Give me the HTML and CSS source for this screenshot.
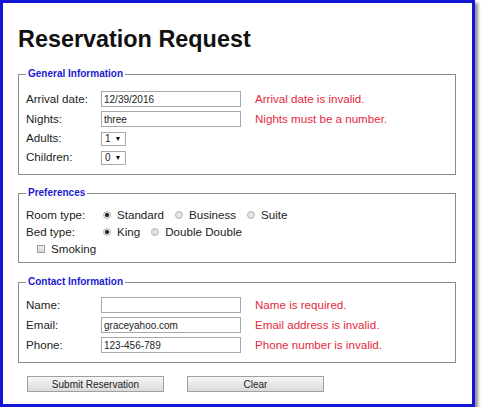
FILE: index.html
```html
<!DOCTYPE html>
<html>
<head>
<meta charset="utf-8">
<title>Reservation Request</title>
<link rel="stylesheet" href="styles.css">
</head>
<body>
<div class="frame">
  <h1>Reservation Request</h1>

  <fieldset class="group general">
    <legend>General Information</legend>
    <div class="row">
      <span class="label">Arrival date:</span>
      <input class="text" type="text" value="12/39/2016">
      <span class="err">Arrival date is invalid.</span>
    </div>
    <div class="row">
      <span class="label">Nights:</span>
      <input class="text" type="text" value="three">
      <span class="err">Nights must be a number.</span>
    </div>
    <div class="row short">
      <span class="label">Adults:</span>
      <span class="select"><select><option>1</option></select></span>
    </div>
    <div class="row short">
      <span class="label">Children:</span>
      <span class="select"><select><option>0</option></select></span>
    </div>
  </fieldset>

  <fieldset class="group prefs">
    <legend>Preferences</legend>
    <div class="prow">
      <span class="label">Room type:</span>
      <div class="opts">
        <label class="opt"><input class="radio" type="radio" name="room" checked>Standard</label>
        <label class="opt"><input class="radio" type="radio" name="room">Business</label>
        <label class="opt"><input class="radio" type="radio" name="room">Suite</label>
      </div>
    </div>
    <div class="prow">
      <span class="label">Bed type:</span>
      <div class="opts">
        <label class="opt"><input class="radio" type="radio" name="bed" checked>King</label>
        <label class="opt"><input class="radio" type="radio" name="bed">Double Double</label>
      </div>
    </div>
    <div class="prow check">
      <label class="opt"><input class="box" type="checkbox">Smoking</label>
    </div>
  </fieldset>

  <fieldset class="group contact">
    <legend>Contact Information</legend>
    <div class="row">
      <span class="label">Name:</span>
      <input class="text" type="text" value="">
      <span class="err">Name is required.</span>
    </div>
    <div class="row">
      <span class="label">Email:</span>
      <input class="text" type="text" value="graceyahoo.com">
      <span class="err">Email address is invalid.</span>
    </div>
    <div class="row">
      <span class="label">Phone:</span>
      <input class="text" type="text" value="123-456-789">
      <span class="err">Phone number is invalid.</span>
    </div>
  </fieldset>

  <div class="actions">
    <button class="btn" type="button">Submit Reservation</button>
    <button class="btn" type="button">Clear</button>
  </div>
</div>
</body>
</html>
```
FILE: styles.css
```css
* { box-sizing: border-box; }
html, body { margin: 0; padding: 0; background: #fff; }
body { font-family: "Liberation Sans", Arial, sans-serif; color: #222; }

.frame {
  width: 475px;
  height: 407px;
  border: 3px solid #1515d6;
  box-shadow: 3px 3px 3px rgba(0, 0, 0, 0.45);
  padding: 22px 16px 0 15px;
  background: #fff;
}

h1 {
  margin: 0;
  font-size: 23.4px;
  line-height: 28px;
  font-weight: bold;
  color: #111;
}

.group {
  margin: 0;
  min-width: 0;
  border: 1px solid #8c8c8c;
  padding: 9px 8px 6px 7px;
}
.general { margin-top: 15px; padding-bottom: 7px; }
.prefs { margin-top: 12px; padding-top: 7px; padding-bottom: 5px; }
.contact { margin-top: 13px; padding-top: 7px; padding-bottom: 7px; }

legend {
  padding: 0 2px;
  font-size: 10px;
  line-height: 12px;
  font-weight: bold;
  color: #1a1ad2;
}

.row {
  display: flex;
  align-items: center;
  height: 20px;
  font-size: 11.6px;
}
.row.short { height: 19px; }
.row .label, .row .err { padding-bottom: 2px; }

.label { width: 75px; flex: none; color: #222; }

.text {
  width: 140px;
  height: 16px;
  margin: 0;
  border: 1px solid #a9a9a9;
  padding: 0 2px;
  font: 10px "Liberation Sans", Arial, sans-serif;
  color: #222;
  background: #fff;
  outline: none;
}

.err { margin-left: 14px; color: #e6283c; }

.select {
  position: relative;
  display: block;
  width: 25px;
  height: 14px;
  border: 1px solid #a9a9a9;
  background: #fff;
}
.select select {
  appearance: none;
  -webkit-appearance: none;
  border: 0;
  margin: 0;
  padding: 0 0 0 3px;
  width: 100%;
  height: 12px;
  font: 10px/12px "Liberation Sans", Arial, sans-serif;
  color: #222;
  background: transparent;
  display: block;
}
.select::after {
  content: "";
  position: absolute;
  right: 5px;
  top: 4px;
  border-left: 2.5px solid transparent;
  border-right: 2.5px solid transparent;
  border-top: 4px solid #111;
}

.prow {
  display: flex;
  align-items: center;
  height: 17px;
  font-size: 11.6px;
}
.opts { display: flex; gap: 11px; padding-left: 2px; }
.opt { display: flex; align-items: center; gap: 6px; }

.radio {
  appearance: none;
  -webkit-appearance: none;
  width: 8px;
  height: 8px;
  margin: 0;
  border-radius: 50%;
  border: 1px solid #b8b8b8;
  background: #e2e2e2;
}
.radio:checked {
  background: radial-gradient(circle, #2a2a2a 0, #2a2a2a 1.6px, #e6e6e6 2.4px);
}

.check { padding-left: 11px; }
.box {
  appearance: none;
  -webkit-appearance: none;
  width: 8px;
  height: 8px;
  margin: 0;
  border: 1px solid #9a9a9a;
  background: linear-gradient(#f0f0f0, #d6d6d6);
}

.actions {
  display: flex;
  gap: 23px;
  margin-top: 13px;
  padding-left: 9px;
}
.btn {
  width: 137px;
  height: 16px;
  margin: 0;
  padding: 0;
  border: 1px solid #a0a0a0;
  background: linear-gradient(#f7f7f7, #dadada);
  font: 10px "Liberation Sans", Arial, sans-serif;
  color: #222;
}
```
